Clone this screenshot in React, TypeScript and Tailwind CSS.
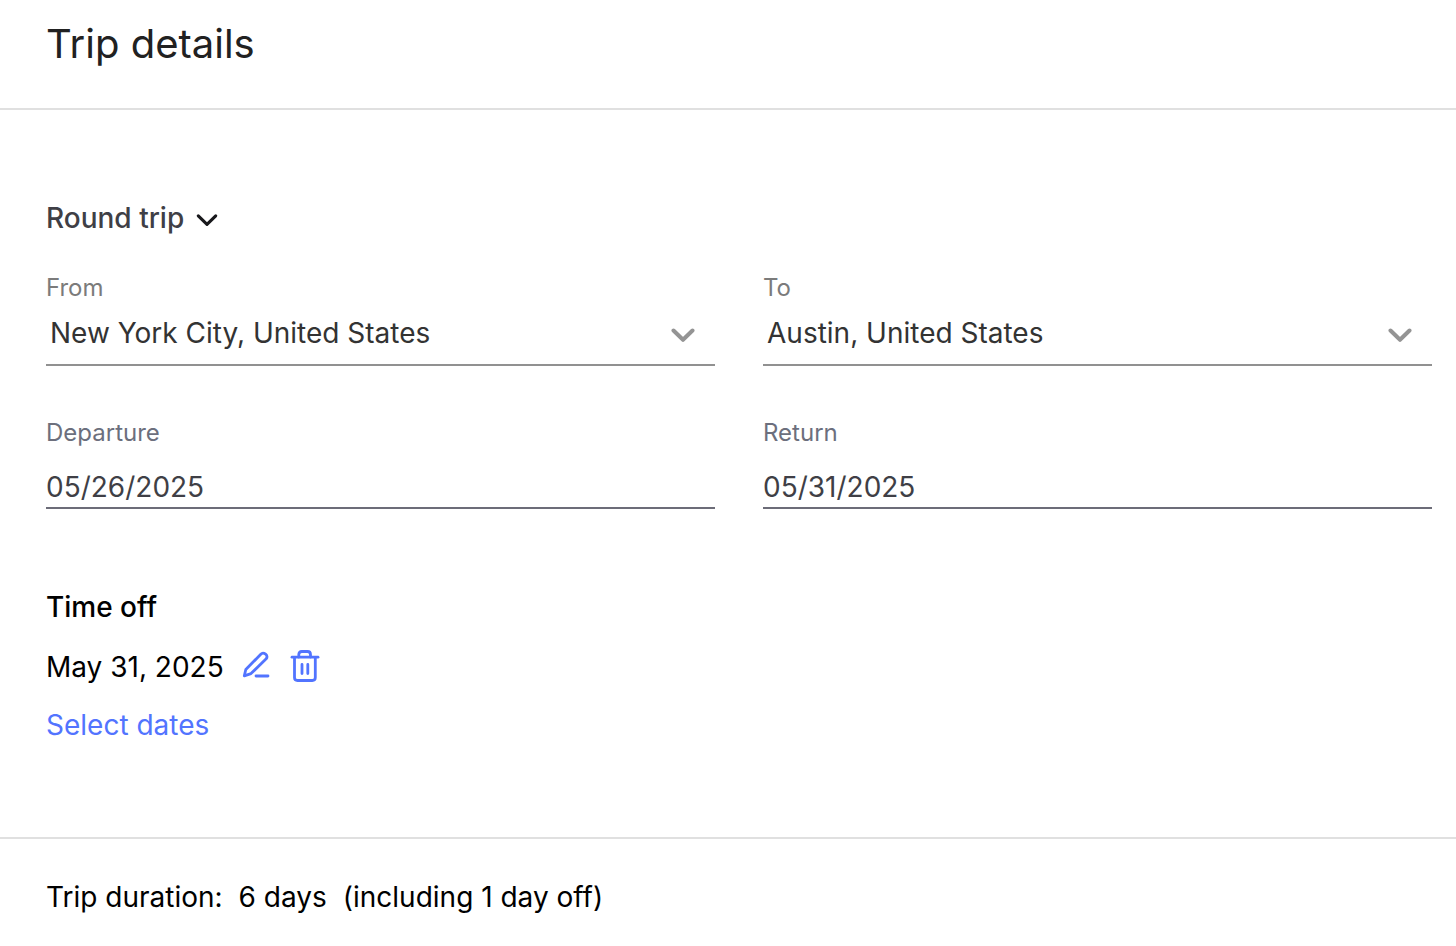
import { useState } from "react";

type FieldProps = {
    id: string;
    label: string;
    value: string;
};

function ChevronIcon({ className }: { className: string }) {
    return (
        <svg className={className} viewBox="0 0 24 14" fill="none" stroke="currentColor" strokeLinecap="round" strokeLinejoin="round" aria-hidden="true">
            <path d="M2.5 2.5L12 11.8L21.5 2.5" />
        </svg>
    );
}

function CitySelect({ id, label, value }: FieldProps) {
    return (
        <div className="flex flex-col">
            <label htmlFor={id} className="text-2xl leading-8 text-[#7b7b7b]">{label}</label>
            <div className="relative border-b-2 border-[#919191]">
                <select id={id} defaultValue={value} className="block h-[60px] w-full appearance-none bg-transparent pb-0.5 pl-1 pr-16 text-[28px] text-[#333333] outline-none">
                    <option value={value}>{value}</option>
                </select>
                <ChevronIcon className="pointer-events-none absolute right-5 top-6 h-[14px] w-6 stroke-[4] text-[#949494]" />
            </div>
        </div>
    );
}

function DateField({ id, label, value }: FieldProps) {
    const [date, setDate] = useState(value);

    return (
        <div className="flex flex-col">
            <label htmlFor={id} className="text-2xl leading-8 text-[#6c6f7d]">{label}</label>
            <input
                id={id}
                type="text"
                value={date}
                onChange={(e) => setDate(e.target.value)}
                className="mt-5 h-10 w-full border-b-2 border-[#6c6c78] bg-transparent pb-0.5 text-[28px] text-[#3f3f46] outline-none"
            />
        </div>
    );
}

export default function App() {
    return (
        <main className="bg-white font-['Inter',sans-serif] text-black">
            <header className="border-b-2 border-[#e0e0e0] px-[46px] pb-10 pt-5">
                <h1 className="text-[40px] leading-[48px] text-[#212121]">Trip details</h1>
            </header>

            <section className="pb-[94px] pl-[46px] pr-6 pt-[90px]">
                <button type="button" className="flex h-9 items-center gap-3 text-[28px] font-medium text-[#3f3f46]">
                    Round trip
                    <ChevronIcon className="mt-1 h-[14px] w-[22px] stroke-[3.4] text-[#18181b]" />
                </button>

                <div className="mt-9 grid grid-cols-2 gap-x-12 gap-y-[51px]">
                    <CitySelect id="from" label="From" value="New York City, United States" />
                    <CitySelect id="to" label="To" value="Austin, United States" />
                    <DateField id="departure" label="Departure" value="05/26/2025" />
                    <DateField id="return" label="Return" value="05/31/2025" />
                </div>

                <h2 className="mt-20 text-[28px] font-medium leading-9">Time off</h2>
                <div className="mt-6 flex h-9 items-center">
                    <span className="text-[28px]">May 31, 2025</span>
                    <button type="button" aria-label="Edit dates" className="mb-0.5 ml-[15px] text-[#5274ff]">
                        <svg className="size-8" viewBox="0 0 32 32" fill="none" stroke="currentColor" strokeWidth="2.8" strokeLinecap="round" strokeLinejoin="round" aria-hidden="true">
                            <path d="M5.3 25.8L6.8 19.5L21.8 4.2C24.5 1.4 30 5.5 27.2 8.8L12 23.6Z" />
                            <path d="M17 26H29" />
                        </svg>
                    </button>
                    <button type="button" aria-label="Delete dates" className="mb-0.5 ml-[18px] text-[#5274ff]">
                        <svg className="size-8" viewBox="0 0 32 32" fill="none" stroke="currentColor" strokeWidth="2.8" strokeLinecap="round" strokeLinejoin="round" aria-hidden="true">
                            <path d="M3 7.2H29" />
                            <path d="M9.8 7V4.5Q9.8 1.5 12.8 1.5H18.5Q21.5 1.5 21.5 4.5V7" />
                            <path d="M5.5 7.5V27.5Q5.5 30.5 8.5 30.5H23.3Q26.3 30.5 26.3 27.5V7.5" />
                            <path d="M13 14.5V23.5M18.8 14.5V23.5" />
                        </svg>
                    </button>
                </div>
                <a href="#dates" className="mt-[22px] inline-block text-[28px] leading-9 text-[#5274ff]">Select dates</a>
            </section>

            <footer className="flex gap-4 border-t-2 border-[#e0e0e0] px-[46px] py-10 text-[28px] leading-9">
                <span>Trip duration:</span>
                <span>6 days</span>
                <span>(including 1 day off)</span>
            </footer>
        </main>
    );
}
